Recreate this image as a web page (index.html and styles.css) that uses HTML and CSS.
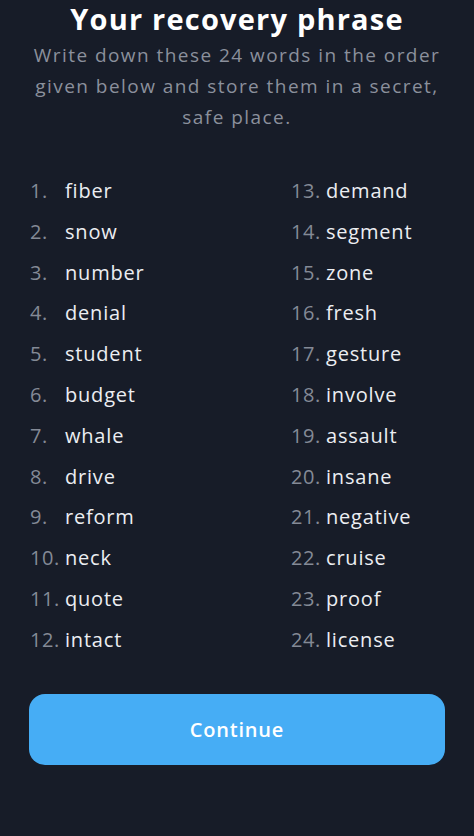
FILE: index.html
```html
<!DOCTYPE html>
<html>
<head>
<meta charset="utf-8">
<link rel="stylesheet" href="styles.css">
</head>
<body>
<main class="screen">
  <h1 class="title">Your recovery phrase</h1>
  <p class="subtitle">Write down these 24 words in the order given below and store them in a secret, safe place.</p>
  <div class="words">
    <ol class="col">
      <li><span class="num">1.</span><span class="word">fiber</span></li>
      <li><span class="num">2.</span><span class="word">snow</span></li>
      <li><span class="num">3.</span><span class="word">number</span></li>
      <li><span class="num">4.</span><span class="word">denial</span></li>
      <li><span class="num">5.</span><span class="word">student</span></li>
      <li><span class="num">6.</span><span class="word">budget</span></li>
      <li><span class="num">7.</span><span class="word">whale</span></li>
      <li><span class="num">8.</span><span class="word">drive</span></li>
      <li><span class="num">9.</span><span class="word">reform</span></li>
      <li><span class="num">10.</span><span class="word">neck</span></li>
      <li><span class="num">11.</span><span class="word">quote</span></li>
      <li><span class="num">12.</span><span class="word">intact</span></li>
    </ol>
    <ol class="col">
      <li><span class="num">13.</span><span class="word">demand</span></li>
      <li><span class="num">14.</span><span class="word">segment</span></li>
      <li><span class="num">15.</span><span class="word">zone</span></li>
      <li><span class="num">16.</span><span class="word">fresh</span></li>
      <li><span class="num">17.</span><span class="word">gesture</span></li>
      <li><span class="num">18.</span><span class="word">involve</span></li>
      <li><span class="num">19.</span><span class="word">assault</span></li>
      <li><span class="num">20.</span><span class="word">insane</span></li>
      <li><span class="num">21.</span><span class="word">negative</span></li>
      <li><span class="num">22.</span><span class="word">cruise</span></li>
      <li><span class="num">23.</span><span class="word">proof</span></li>
      <li><span class="num">24.</span><span class="word">license</span></li>
    </ol>
  </div>
  <button class="continue" type="button">Continue</button>
</main>
</body>
</html>
```
FILE: styles.css
```css
html, body {
  margin: 0;
  padding: 0;
  background: #171c28;
}
body {
  font-family: "Open Sans", "DejaVu Sans", sans-serif;
  width: 474px;
  height: 836px;
  overflow: hidden;
}
.screen {
  display: flex;
  flex-direction: column;
  padding: 0 29px;
}
.title {
  margin: 0;
  font-size: 29px;
  line-height: 38px;
  font-weight: 700;
  color: #ffffff;
  text-align: center;
  letter-spacing: 1.2px;
}
.subtitle {
  margin: 2px -6px 0;
  font-size: 19px;
  line-height: 31px;
  color: #8b909c;
  text-align: center;
  letter-spacing: 1.45px;
}
.words {
  display: grid;
  grid-template-columns: 261px 1fr;
  margin-top: 38px;
}
.col {
  list-style: none;
  margin: 0;
  padding: 0 0 0 1px;
  display: flex;
  flex-direction: column;
}
.col li {
  display: flex;
  align-items: baseline;
  height: 40.8px;
  font-size: 20px;
  line-height: 40.8px;
}
.num {
  flex: 0 0 35px;
  color: #848a96;
  letter-spacing: 0.6px;
}
.word {
  color: #eceef2;
  font-weight: 500;
  letter-spacing: 0.8px;
}
.continue {
  margin-top: 33px;
  height: 71px;
  border: none;
  border-radius: 16px;
  background: #46adf5;
  color: #ffffff;
  font-family: inherit;
  font-size: 20px;
  font-weight: 600;
  letter-spacing: 0.8px;
}
```
